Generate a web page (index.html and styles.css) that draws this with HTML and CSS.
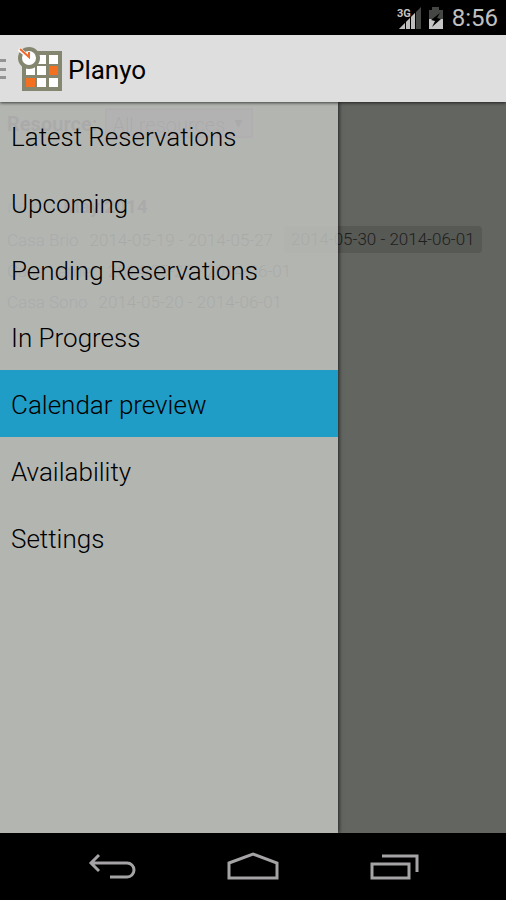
FILE: index.html
```html
<!DOCTYPE html>
<html lang="en">
<head>
<meta charset="utf-8">
<meta name="viewport" content="width=device-width, initial-scale=1">
<title>Planyo</title>
<link rel="stylesheet" href="styles.css">
</head>
<body>
<div class="status-bar">
  <svg class="signal" width="26" height="26" viewBox="0 0 26 26" role="img" aria-label="3G signal">
    <path fill="#454745" d="M25 2v22H3z"/>
    <path fill="#bdbebd" d="M19 8v16H3z"/>
    <path stroke="#000" d="M9.500 10v14M14.500 8v16M19.500 6v18" fill="none"/>
    <path fill="#000" d="M0 0h14v13H0z"/>
    <text class="network" x="1" y="12">3G</text>
  </svg>
  <svg class="battery" width="16" height="22" viewBox="0 0 16 22" role="img" aria-label="Battery charging">
    <path fill="#454745" d="M4 0h7v3h4v9H1V3h3z"/>
    <path fill="#c4c5c4" d="M1 12h14v10H1z"/>
    <path fill="#000" d="M12 6 3 13l4 1-3 6 9-8-4-1z"/>
  </svg>
  <time class="clock">8:56</time>
</div>
<header class="action-bar">
  <button class="up" type="button" aria-label="Close menu">
    <svg width="7" height="22" viewBox="0 0 7 22"><path fill="#949494" d="M0 1h6v3H0zM0 10h6v3H0zM0 18h6v3H0z"/></svg>
  </button>
  <svg class="logo" width="46" height="46" viewBox="0 0 46 46" aria-hidden="true">
    <path fill="#84866f" d="M4 5h40v40H4z"/>
    <path fill="#fff" d="M19 9h9v9h-9zM31 9h9v9h-9zM8 20h9v9H8zM19 20h9v9h-9zM19 32h9v9h-9zM31 32h9v9h-9z"/>
    <path fill="#f37021" d="M31 20h9v9h-9zM8 32h9v9H8z"/>
    <circle cx="11" cy="12" r="9" fill="#fff" stroke="#84866f" stroke-width="4"/>
    <path stroke="#fff" stroke-width="4" d="m1 3 6 5"/>
    <path fill="none" stroke="#f0692c" stroke-width="2" d="m2 3 9 8V6"/>
  </svg>
  <h1>Planyo</h1>
</header>
<main class="stage">
  <section class="calendar">
    <div class="filter">
      <label for="resource">Resource:</label>
      <span class="select-wrap"><select id="resource"><option>All resources</option></select></span>
    </div>
    <div class="month"><a href="#next">next</a><strong>May 2014</strong></div>
    <div class="row"><a href="#brio">Casa Brio</a><span>2014-05-19 - 2014-05-27</span><span class="booked">2014-05-30 - 2014-06-01</span></div>
    <div class="row"><a href="#lamer">Casa Lamer</a><span>2014-05-27 - 2014-06-01</span></div>
    <div class="row"><a href="#sono">Casa Sono</a><span>2014-05-20 - 2014-06-01</span></div>
  </section>
  <nav class="drawer" aria-label="Main">
    <a href="#latest">Latest Reservations</a>
    <a href="#upcoming">Upcoming</a>
    <a href="#pending">Pending Reservations</a>
    <a href="#progress">In Progress</a>
    <a href="#calendar" class="active" aria-current="page">Calendar preview</a>
    <a href="#availability">Availability</a>
    <a href="#settings">Settings</a>
  </nav>
</main>
<footer class="nav-bar">
  <button type="button" aria-label="Back"><svg width="50" height="30" viewBox="0 0 50 30"><path fill="none" stroke="#a5a3a5" stroke-width="3" d="m13 3-8 8 8 8M5 11h36a7 7 0 0 1 0 14H24"/></svg></button>
  <button type="button" aria-label="Home"><svg width="54" height="30" viewBox="0 0 54 30"><path fill="none" stroke="#a5a3a5" stroke-width="3" d="M3 11 27 2l24 9v15H3z"/></svg></button>
  <button type="button" aria-label="Recent apps"><svg width="50" height="30" viewBox="0 0 50 30"><path fill="none" stroke="#a5a3a5" stroke-width="3" d="M2 12h37v14H2zM12 4h35v16"/></svg></button>
</footer>
</body>
</html>
```
FILE: styles.css
```css
* { box-sizing: border-box; }

body {
  margin: 0;
  min-height: 100vh;
  display: flex;
  flex-direction: column;
  background: #000;
  color: #000;
  font-family: Roboto, "Liberation Sans", sans-serif;
}

button {
  padding: 0;
  border: 0;
  background: none;
}

a { text-decoration: none; }
svg { display: block; }

.status-bar {
  display: flex;
  align-items: center;
  justify-content: flex-end;
  gap: 6px;
  height: 35px;
  padding-right: 8px;
}

.network {
  fill: #c4c5c4;
  font-size: 11px;
  font-weight: 700;
}

.clock {
  margin-left: 2px;
  padding-top: 2px;
  color: #c0c0c0;
  font-size: 24px;
  line-height: 33px;
}

.action-bar {
  position: relative;
  display: flex;
  align-items: center;
  height: 67px;
  background: #dedede;
  box-shadow: 0 1px 3px #000a;
  z-index: 2;
}

.logo { margin-left: 11px; }

h1 {
  margin: 0 0 0 4px;
  padding-top: 2px;
  font-size: 26px;
  font-weight: 400;
  line-height: 36px;
}

.stage {
  position: relative;
  flex: 1;
  background: #636561;
}

.calendar {
  padding: 7px 7px;
  font-size: 17px;
  white-space: nowrap;
}

.filter {
  display: flex;
  align-items: center;
  gap: 8px;
  height: 30px;
  color: #302030;
  font-size: 20px;
}

.filter label { font-weight: 700; }

.select-wrap {
  position: relative;
  line-height: 30px;
}

.select-wrap::after {
  content: "▼";
  position: absolute;
  right: 8px;
  top: 0;
  font-size: 14px;
}

select {
  appearance: none;
  width: 148px;
  height: 30px;
  padding: 0 5px;
  border: 2px solid #58405a;
  border-radius: 0;
  background: #62546a;
  color: #302030;
  font: inherit;
  font-weight: 300;
}

.month {
  display: flex;
  gap: 20px;
  margin: 54px 0 3px;
  color: #302030;
  font-size: 19px;
  line-height: 28px;
}

.month a { color: #357; }

.row {
  display: flex;
  align-items: center;
  gap: 11px;
  height: 31px;
  color: #1e1e1e;
  font-weight: 300;
}

.row a { color: #224; }

.booked {
  padding: 0 7px;
  border-radius: 4px;
  background: #575955;
  line-height: 27px;
}

.drawer {
  position: absolute;
  inset: 0 auto 0 0;
  width: 66.700%;
  background: #c1c3c0d9;
  box-shadow: 1px 0 4px #000a;
}

.drawer a {
  display: block;
  height: 67px;
  padding-left: 11px;
  color: #000;
  font-size: 26px;
  font-weight: 300;
  line-height: 70px;
}

.drawer .active { background: #209dc7; }

.nav-bar {
  display: flex;
  align-items: center;
  justify-content: center;
  gap: 90px;
  height: 67px;
}
```
